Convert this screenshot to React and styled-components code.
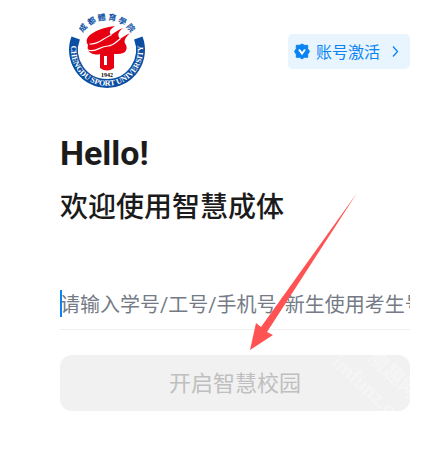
import React from 'react';
import styled, { createGlobalStyle } from 'styled-components';

const colors = {
    text: '#1b1b1b',
    blue: '#0b84f3',
    paleBlue: '#e8f5ff',
    placeholder: '#747b86',
    line: '#efefef',
    disabled: '#f1f1f1',
    disabledText: '#bfbfbf',
    arrow: '#ff5353',
    seal: '#0b4ea2',
    torch: '#e60012',
};

const GlobalStyle = createGlobalStyle`
    * {
        box-sizing: border-box;
    }
    body {
        margin: 0;
        background: #fff;
        color: ${colors.text};
        font-family: Roboto, 'Noto Sans CJK SC', sans-serif;
    }
`;

const Page = styled.main`
    position: relative;
    padding: 12px 38px 40px 60px;
`;

const TopBar = styled.header`
    display: flex;
    align-items: flex-start;
    justify-content: space-between;
    padding-left: 8px;
`;

const Logo = styled.svg`
    width: 80px;
    height: 80px;
    overflow: visible;
`;

const ActivateLink = styled.a`
    display: flex;
    align-items: center;
    gap: 4px;
    height: 35px;
    margin-top: 22px;
    padding: 0 8px 2px 6px;
    border-radius: 5px;
    background: ${colors.paleBlue};
    color: ${colors.blue};
    font-size: 16px;
    text-decoration: none;
`;

const Icon = styled.svg`
    width: 18px;
    height: 18px;
`;

const Title = styled.h1`
    margin: 40px 0 0;
    font-size: 34px;
    font-weight: 700;
    line-height: 42px;
`;

const Subtitle = styled.h2`
    margin: 14px 0 0;
    font-size: 28px;
    font-weight: 500;
    line-height: 40px;
`;

const Form = styled.form`
    margin-top: 56px;
`;

const Field = styled.div`
    position: relative;
    height: 46px;
    padding-top: 7px;
    border-bottom: 1px solid ${colors.line};

    /* text cursor at the start of the empty field */
    &::before {
        content: '';
        position: absolute;
        top: 6px;
        left: 0;
        width: 2px;
        height: 27px;
        background: ${colors.blue};
    }
`;

const AccountInput = styled.input`
    display: block;
    width: 100%;
    height: 28px;
    padding: 0;
    border: 0;
    border-radius: 0;
    outline: none;
    background: transparent;
    font-family: inherit;
    font-size: 20px;

    &::placeholder {
        color: ${colors.placeholder};
        opacity: 1;
    }
`;

const SubmitButton = styled.button`
    position: relative;
    display: block;
    width: 100%;
    height: 56px;
    margin-top: 25px;
    padding: 0 0 4px;
    border: 0;
    border-radius: 12px;
    overflow: hidden;
    background: ${colors.disabled};
    color: ${colors.disabledText};
    font-family: inherit;
    font-size: 22px;
`;

const Watermark = styled.span`
    position: absolute;
    top: 2px;
    right: -28px;
    color: #f5f5f5;
    font-size: 20px;
    font-weight: 700;
    line-height: 28px;
    transform: rotate(42deg);
`;

const Pointer = styled.svg`
    position: absolute;
    top: 190px;
    left: 245px;
    width: 115px;
    height: 164px;
    pointer-events: none;
`;

const UniversityLogo = () => (
    <Logo viewBox="0 0 80 80" role="img" aria-label="成都体育学院">
        <defs>
            <path id="seal-top" d="M10 37 A29 29 0 0 1 68 37" />
            <path id="seal-bottom" d="M5 26 A36 36 0 1 0 73 26" />
        </defs>
        <path d="M7.7 26 A33.5 33.5 0 1 0 70.3 26" fill="none" stroke={colors.seal} strokeWidth="9" />
        <text fill={colors.seal} fontSize="8" fontWeight="700" fontFamily="'Noto Sans CJK TC', sans-serif">
            <textPath href="#seal-top" startOffset="50%" textAnchor="middle">成 都 體 育 學 院</textPath>
        </text>
        <text fill="#fff" fontSize="8" fontWeight="700" fontFamily="Liberation Serif, serif">
            <textPath href="#seal-bottom" startOffset="50%" textAnchor="middle">CHENGDU SPORT UNIVERSITY</textPath>
        </text>
        <path
            d="M47 14 C41 18 41 20 43 23 C47 20 50 18 55 16 C50 20 49 23 52 27 C55 25 58 23 62 21 C57 26 55 29 58 33 C60 38 57 42 50 42 L46 42 V56 Q39 61 32 56 V42 C25 44 18 40 20 33 C14 24 30 16 47 14 Z"
            fill={colors.torch}
        />
        <g fill="none" stroke="#fff" strokeLinecap="round">
            <path d="M22 32 C30 33 34 27 43 23" strokeWidth="1.2" />
            <path d="M20 38 C29 41 31 34 40 34 C45 34 48 30 52 27" strokeWidth="1.2" />
            <path d="M37.5 44 V53" strokeWidth="3" strokeLinecap="butt" />
        </g>
        <text x="39" y="65" textAnchor="middle" fontSize="6" fontWeight="700" fontFamily="Liberation Serif, serif">1942</text>
    </Logo>
);

const App = () => (
    <>
        <GlobalStyle />
        <Page>
            <TopBar>
                <UniversityLogo />
                <ActivateLink href="#activate">
                    <Icon viewBox="0 0 18 18" aria-hidden="true">
                        <path
                            d="M8 2 L10.3 3.3 H13.7 V6.7 L15.5 9.5 L13.7 12.3 V15.3 H10.3 L8 17 L5.7 15.3 H2.3 V12.3 L.5 9.5 L2.3 6.7 V3.3 H5.7 Z"
                            fill={colors.blue}
                            stroke={colors.blue}
                            strokeLinejoin="round"
                        />
                        <path d="M5 7.5 L8 11.5 L11 7.5" fill="none" stroke="#fff" strokeWidth="2" />
                    </Icon>
                    账号激活
                    <Icon viewBox="0 0 18 18" aria-hidden="true">
                        <path d="M9 4.5 L13.5 9.5 L9 14.5" fill="none" stroke={colors.blue} strokeWidth="1.3" />
                    </Icon>
                </ActivateLink>
            </TopBar>
            <Title>Hello!</Title>
            <Subtitle>欢迎使用智慧成体</Subtitle>
            <Form>
                <Field>
                    <AccountInput
                        type="text"
                        aria-label="账号"
                        placeholder="请输入学号/工号/手机号/新生使用考生号"
                    />
                </Field>
                <SubmitButton type="submit" disabled>
                    开启智慧校园
                    <Watermark aria-hidden="true">魔趣网<br />imfunz.com</Watermark>
                </SubmitButton>
            </Form>
            <Pointer viewBox="0 0 115 164" aria-hidden="true">
                <path d="M112 3 L22 142 L28 145 L5 160 L11 133 L16 137 Z" fill={colors.arrow} />
            </Pointer>
        </Page>
    </>
);

export default App;
